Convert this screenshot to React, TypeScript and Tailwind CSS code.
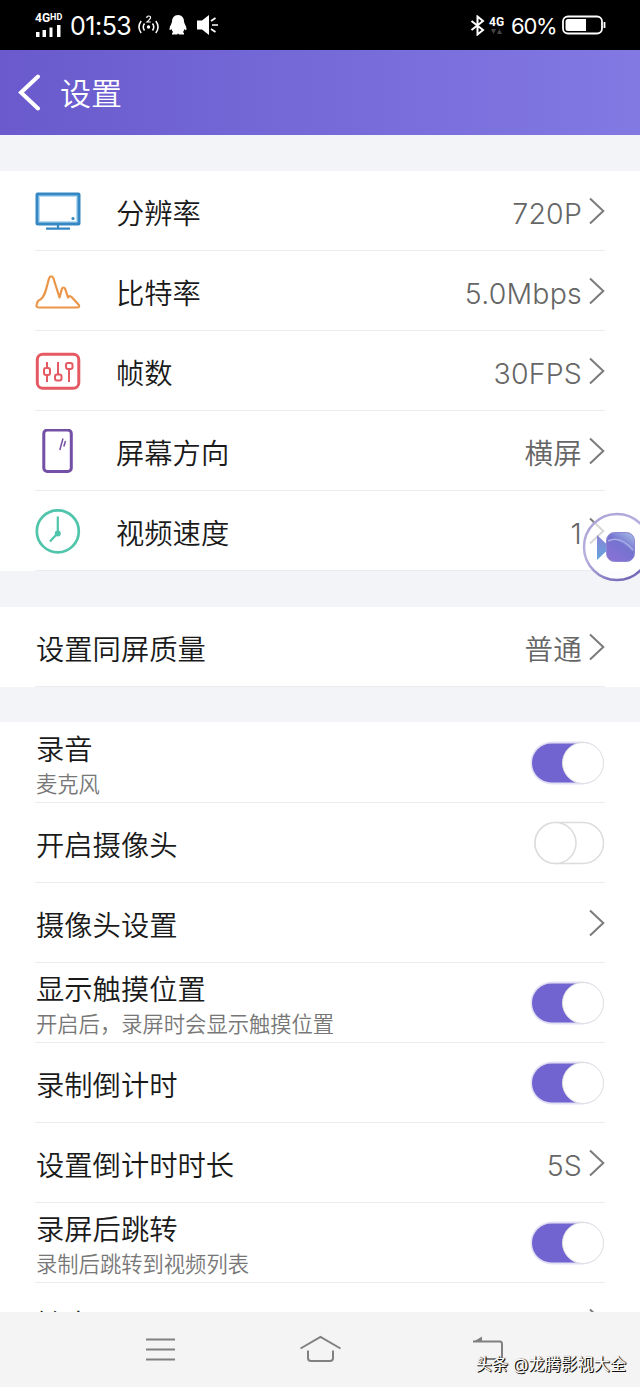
import { useState } from 'react';
import type { ReactNode } from 'react';

type RowProps = {
  label: string;
  sub?: string;
  icon?: ReactNode;
  value?: string;
  children?: ReactNode;
};

const Chevron = () => (
  <svg className="w-4 h-7 shrink-0" viewBox="0 0 16 28" fill="none" stroke="#7b7b7b" strokeWidth="2">
    <path d="M1 1.5L14.3 14L1 26.5" />
  </svg>
);

const MonitorIcon = () => (
  <svg width="46" height="46" viewBox="0 0 46 46" fill="none" stroke="#3588c4">
    <rect x="3" y="6" width="40" height="28" stroke="#b5dcf5" strokeWidth="4" />
    <rect x="2" y="5" width="42" height="30" rx="0.500" strokeWidth="3" />
    <circle cx="38" cy="29.500" r="1.600" fill="#3588c4" stroke="none" />
    <path d="M23 35v5M11 39.600h24" strokeWidth="2.200" />
  </svg>
);

const BitrateIcon = () => (
  <svg width="46" height="46" viewBox="0 0 46 46" fill="none" stroke="#eb9548" strokeWidth="2.200" strokeLinejoin="round">
    <path d="M4 38.500C1.500 38.500 1 37.500 2 34.500C2.500 31.500 3.500 31 5.500 30.500C10 28 11 20 14 9.500C15 6.500 17.500 6.500 18.500 9.500L24.500 28.500L27 19.500C27.800 18 29.500 18.200 30.200 20L33 28.500C34.500 26.500 36 27 37.500 29L43.500 35.500C45 37.500 44 38.500 42 38.500Z" />
  </svg>
);

const FramesIcon = () => (
  <svg width="46" height="46" viewBox="0 0 46 46" fill="none" stroke="#e55a62" strokeWidth="2">
    <rect x="2.300" y="5.300" width="41.500" height="34" rx="5.500" strokeWidth="3" />
    <path d="M12 13v6M12 26v7M23 13v13M34 20v13" />
    <rect x="9" y="19" width="6" height="7" rx="2" />
    <rect x="20" y="25.500" width="6.500" height="6" rx="2" />
    <rect x="31" y="14" width="6.500" height="6" rx="2" />
  </svg>
);

const OrientationIcon = () => (
  <svg width="46" height="46" viewBox="0 0 46 46" fill="none" stroke="#7350a5">
    <rect x="8.800" y="1" width="27.500" height="41.500" rx="3.500" strokeWidth="3" />
    <path d="M28 9.500L24.800 21M30.500 12L28.800 17.500" strokeWidth="1.500" />
  </svg>
);

const SpeedIcon = () => (
  <svg width="46" height="46" viewBox="0 0 46 46" fill="none" stroke="#50c5ab">
    <circle cx="22.800" cy="22.300" r="21" strokeWidth="2.700" />
    <path d="M22.800 7.500v16.500L15 32.500" strokeWidth="2.200" />
    <circle cx="22.800" cy="24.500" r="3" fill="#50c5ab" stroke="none" />
  </svg>
);

const Row = ({ label, sub, icon, value, children }: RowProps) => (
  <div className="h-20 mx-[35px] flex items-center border-b border-[#ececee]">
    {icon && <div className="w-[46px] mr-[34px] pt-0.5 shrink-0">{icon}</div>}
    <div className={sub ? 'flex-1 pl-px pt-[3px]' : 'flex-1 pl-px pt-1.5'}>
      <div className="text-[28.3px] leading-[40px] text-[#1a1a1a]">{label}</div>
      {sub && <div className="text-[21.3px] leading-[29px] text-[#777]">{sub}</div>}
    </div>
    {value && <span className="pt-1.5 mr-[7px] text-[28.5px] leading-10 tracking-[0.2px] text-[#666]">{value}</span>}
    {children ?? <Chevron />}
  </div>
);

const Toggle = ({ initial = false }: { initial?: boolean }) => {
  const [on, setOn] = useState(initial);

  return (
    <button onClick={() => setOn(!on)} className="shrink-0" aria-pressed={on}>
      {on ? (
        <svg className="w-[75px] h-[44px]" viewBox="0 0 75 44">
          <rect x="0.500" y="0.500" width="73" height="43" rx="21.500" fill="#e2e0f2" />
          <rect x="2" y="2.500" width="70" height="39" rx="19.500" fill="#7164d0" />
          <circle cx="53" cy="22" r="20.500" fill="#fff" stroke="#dedee3" strokeWidth="1" />
        </svg>
      ) : (
        <svg className="w-[75px] h-[44px]" viewBox="0 0 75 44" fill="#fff" stroke="#dcdcdc" strokeWidth="1.500">
          <rect x="5" y="1.500" width="68.500" height="41" rx="20.500" />
          <circle cx="25.500" cy="22" r="20.500" />
        </svg>
      )}
    </button>
  );
};

const StatusBar = () => (
  <div className="h-[50px] shrink-0 bg-black text-white flex items-center justify-between pl-[35px] pr-[34px]">
    <div className="flex items-center">
      <div className="w-[27px]">
        <div className="flex items-start font-['Roboto'] text-[12px] leading-[11px] font-bold">
          4G<span className="text-[9px] leading-[8px]">HD</span>
        </div>
        <svg className="mt-px" width="27" height="12" fill="#fff">
          <path d="M1 7h3.500v5H1zM7.500 5H11v7H7.500zM14.500 2.500h3V12h-3zM22 0h3.500v12H22z" />
        </svg>
      </div>
      <span className="ml-2 pt-0.5 w-[61px] text-[25px] leading-8 font-normal tracking-[-0.5px] whitespace-nowrap">01:53</span>
      <svg className="ml-[7px]" width="21" height="22" viewBox="0 0 21 22" fill="none" stroke="#fff" strokeWidth="1.500">
        <circle cx="10.500" cy="13" r="1.700" fill="#fff" stroke="none" />
        <path d="M6.500 9.500q-2.500 3.500 0 7M14.500 9.500q2.500 3.500 0 7M3.200 7q-4.500 6 0 12M17.800 7q4.500 6 0 12" />
        <path d="M8.800 4q0-2 1.900-2q2 0 1.800 1.800q0 1-3.500 4.200h3.800" strokeWidth="1.200" />
      </svg>
      <svg className="ml-[10px]" width="18" height="20" viewBox="0 0 18 20" fill="#fff">
        <path d="M9 0C5 0 3 3 3 6.500C3 8.500 0.500 11 0.500 14C0.500 15.500 1.300 15.500 2.500 14Q3 16 4 17Q2.500 18 3 19.500H8L9 18.500L10 19.500H15Q15.500 18 14 17Q15 16 15.500 14C16.700 15.500 17.500 15.500 17.500 14C17.500 11 15 8.500 15 6.500C15 3 13 0 9 0Z" />
      </svg>
      <svg className="ml-[10px]" width="21" height="20" viewBox="0 0 21 20" fill="#fff">
        <path d="M0 5.500H5L12 0V20L5 14.500H0Z" />
        <path d="M14 6L18.500 3M15 10H21M14 14L18.500 17" stroke="#fff" strokeWidth="1.700" />
      </svg>
    </div>
    <div className="flex items-center">
      <svg width="15" height="21" viewBox="0 0 14 21" fill="none" stroke="#fff" strokeWidth="2">
        <path d="M1 6L12.500 15L7 19.500V1.500L12.500 6L1 15" />
      </svg>
      <div className="ml-1 w-[16px] pt-px">
        <div className="font-['Roboto'] text-[12px] leading-3 font-bold">4G</div>
        <svg className="mt-px" width="16" height="6" fill="#444">
          <path d="M2 0h5L4.500 5zM8 5h5L10.500 0z" />
        </svg>
      </div>
      <span className="ml-[6px] mr-[8px] pt-0.5 w-[43px] text-[22px] leading-8 font-normal tracking-[-1.2px] whitespace-nowrap">60%</span>
      <svg width="44" height="20" viewBox="0 0 44 20" fill="none" stroke="#fff" strokeWidth="1.800">
        <rect x="1" y="1.500" width="39" height="17" rx="5" />
        <path d="M6 4h18v12H6q-2.500 0-2.500-2.500v-7Q3.500 4 6 4Z" fill="#fff" stroke="none" />
        <path d="M42.500 7v6" />
      </svg>
    </div>
  </div>
);

const FloatingRecorder = () => (
  <svg className="absolute left-[582px] top-[512px]" width="58" height="70" viewBox="0 0 58 70">
    <defs>
      <linearGradient id="ring" x1="0" y1="0" x2="0.600" y2="1">
        <stop offset="0" stopColor="#a79dd4" />
        <stop offset="0.500" stopColor="#b9b2e0" />
        <stop offset="1" stopColor="#766bb9" />
      </linearGradient>
      <linearGradient id="cam" x1="1" y1="0" x2="0.300" y2="1">
        <stop offset="0" stopColor="#a9c3ea" />
        <stop offset="0.500" stopColor="#7673cf" />
        <stop offset="1" stopColor="#8772d4" />
      </linearGradient>
      <linearGradient id="lens" x1="0" y1="0" x2="0" y2="1">
        <stop offset="0" stopColor="#8a83d8" />
        <stop offset="1" stopColor="#63a5dc" />
      </linearGradient>
    </defs>
    <circle cx="35" cy="35" r="33" fill="#fff" fillOpacity="0.700" stroke="url(#ring)" strokeWidth="2.500" />
    <path d="M15 23L24.500 32V39L15 48Z" fill="url(#lens)" />
    <rect x="24.500" y="20.500" width="28" height="29" rx="8" fill="url(#cam)" stroke="#8d88cf" strokeWidth="1" />
    <path d="M26 29Q38 23 51 38" fill="none" stroke="#a9afe8" strokeWidth="1.500" />
  </svg>
);

const NavBar = () => (
  <div className="relative h-[75px] shrink-0 bg-[#f4f4f4]">
    <div className="flex pl-[145px] pt-[22px]">
      <svg width="31" height="30" fill="none" stroke="#808080" strokeWidth="2">
        <path d="M1 5.500H30M1 15.500H30M1 25.500H30" />
      </svg>
      <svg className="ml-[123px]" width="43" height="30" fill="none" stroke="#808080" strokeWidth="2">
        <path d="M1.500 14.500L21.500 3L41.500 14.500M9 16.500V24Q9 27 12 27H31Q34 27 34 24V16.500" />
      </svg>
      <svg className="ml-[130px]" width="32" height="30" fill="none" stroke="#808080" strokeWidth="2">
        <path d="M1 7.500H28Q30 7.500 30 10V25H11" />
        <path d="M1 8L10 2.500V8Z" fill="#808080" stroke="none" />
      </svg>
    </div>
    <div className="absolute right-[14px] top-10 text-[16.3px] leading-6 font-normal text-white whitespace-nowrap [text-shadow:1px_1px_0_#111,1px_0_1px_#111]">
      头条 @龙腾影视大全
    </div>
  </div>
);

const App = () => {
  return (
    <div className="relative w-[640px] h-[1387px] overflow-hidden flex flex-col bg-[#f2f4f8] font-[350] font-['Inter','Noto_Sans_CJK_SC',sans-serif]">
      <StatusBar />
      <header className="h-[85px] shrink-0 flex items-center bg-linear-to-r from-[#6a5acd] to-[#8279e3] text-white">
        <svg className="ml-[18px]" width="24" height="38" fill="none" stroke="#fff" strokeWidth="4" strokeLinecap="round">
          <path d="M20 2.500L3 18.500L20 34.500" />
        </svg>
        <h1 className="ml-[18px] pt-[3px] text-[31px] leading-[44px]">设置</h1>
      </header>

      <section className="mt-9 bg-white">
        <Row label="分辨率" icon={<MonitorIcon />} value="720P" />
        <Row label="比特率" icon={<BitrateIcon />} value="5.0Mbps" />
        <Row label="帧数" icon={<FramesIcon />} value="30FPS" />
        <Row label="屏幕方向" icon={<OrientationIcon />} value="横屏" />
        <Row label="视频速度" icon={<SpeedIcon />} value="1" />
      </section>

      <section className="mt-9 bg-white">
        <Row label="设置同屏质量" value="普通" />
      </section>

      <section className="mt-[35px] pt-px flex-1 min-h-0 overflow-hidden bg-white">
        <Row label="录音" sub="麦克风">
          <Toggle initial />
        </Row>
        <Row label="开启摄像头">
          <Toggle />
        </Row>
        <Row label="摄像头设置" />
        <Row label="显示触摸位置" sub="开启后，录屏时会显示触摸位置">
          <Toggle initial />
        </Row>
        <Row label="录制倒计时">
          <Toggle initial />
        </Row>
        <Row label="设置倒计时时长" value="5S" />
        <Row label="录屏后跳转" sub="录制后跳转到视频列表">
          <Toggle initial />
        </Row>
        <div className="-mt-px">
          <Row label="输出" />
        </div>
      </section>

      <NavBar />
      <FloatingRecorder />
    </div>
  );
};

export default App;
